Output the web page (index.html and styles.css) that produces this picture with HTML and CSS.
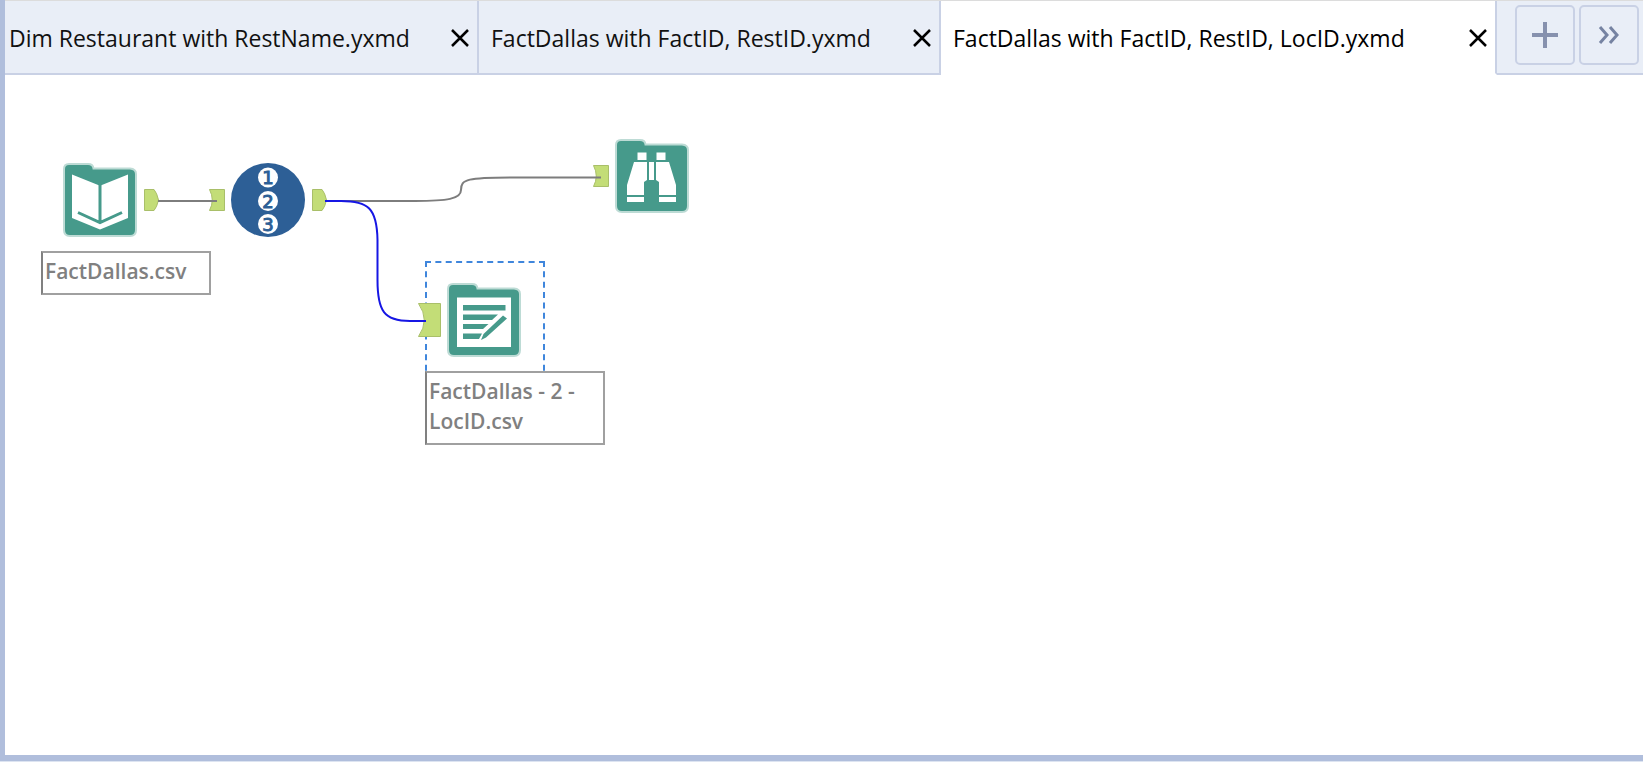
FILE: index.html
```html
<!DOCTYPE html>
<html lang="en">
<head>
<meta charset="utf-8">
<title>Workflow designer</title>
<link rel="stylesheet" href="styles.css">
</head>
<body>
<div class="window">
  <header class="tabbar">
    <div class="tab tab-first">
      <button class="tab-name" type="button">Dim Restaurant with RestName.yxmd</button>
      <button class="tab-close" type="button" aria-label="Close Dim Restaurant with RestName.yxmd"><svg viewBox="0 0 18 18"><path d="M1 1L17 17M17 1L1 17"/></svg></button>
    </div>
    <div class="tab">
      <button class="tab-name" type="button">FactDallas with FactID, RestID.yxmd</button>
      <button class="tab-close" type="button" aria-label="Close FactDallas with FactID, RestID.yxmd"><svg viewBox="0 0 18 18"><path d="M1 1L17 17M17 1L1 17"/></svg></button>
    </div>
    <div class="tab tab-active">
      <button class="tab-name" type="button">FactDallas with FactID, RestID, LocID.yxmd</button>
      <button class="tab-close" type="button" aria-label="Close FactDallas with FactID, RestID, LocID.yxmd"><svg viewBox="0 0 18 18"><path d="M1 1L17 17M17 1L1 17"/></svg></button>
    </div>
    <div class="actions">
      <button class="action" type="button" aria-label="New workflow"><svg viewBox="0 0 60 60"><path class="plus" d="M17 30H43M30 17V43"/></svg></button>
      <button class="action" type="button" aria-label="More tabs"><svg viewBox="0 0 60 60"><path class="chevrons" d="M21 22L28 30L21 38M31 22L38 30L31 38"/></svg></button>
    </div>
  </header>

  <main class="canvas">
    <div class="selection"></div>

    <svg class="anchor anchor-a" viewBox="0 0 16 22"><path d="M.5 .5H10Q13 4 14.500 11Q13 18 10 21.500H.5Z"/></svg>
    <svg class="anchor anchor-b" viewBox="0 0 16 22"><path d="M.5 .5H15.500V21.500H.5Q6 11 .5 .5Z"/></svg>
    <svg class="anchor anchor-c" viewBox="0 0 16 22"><path d="M.5 .5H10Q13 4 14.500 11Q13 18 10 21.500H.5Z"/></svg>
    <svg class="anchor anchor-d" viewBox="0 0 16 22"><path d="M.5 .5H15.500V21.500H.5Q6 11 .5 .5Z"/></svg>
    <svg class="anchor anchor-e" viewBox="0 0 23 34"><path d="M.5 .5H22.500V33.500H.5Q12 17 .5 .5Z"/></svg>

    <svg class="wires" viewBox="0 0 700 400">
      <path class="wire" d="M153 126H212"/>
      <path class="wire" d="M320 126H410C442 126 456 124 456 115C456 104 462 102.500 510 102.500H596"/>
      <path class="wire wire-selected" d="M320 126H336C363 126 372 133 372.500 165V205C372.500 236 379 246 405 246H421"/>
    </svg>

    <svg class="tool tool-input" viewBox="0 0 74 74" role="img" aria-label="Input Data">
      <path class="folder" d="M6 1H25Q30 1 30.500 5.500H67Q73 6 73 11V67Q73 73 67 73H7Q1 73 1 67V6Q1 1 6 1Z"/>
      <path class="paper" d="M9 11.500L37 22.700L65 11.500V55L37 66.500L9 55Z"/>
      <path class="mark" d="M37 22V59M15 49.500L37 59.500L59 49.500"/>
    </svg>

    <svg class="tool tool-record" viewBox="0 0 74 74" role="img" aria-label="Record ID">
      <circle class="disc" cx="37" cy="37" r="37"/>
      <circle class="paper" cx="37" cy="14.500" r="10"/>
      <circle class="paper" cx="37" cy="38" r="10"/>
      <circle class="paper" cx="37" cy="61" r="10"/>
      <text x="37" y="21">1</text>
      <text x="37" y="44.500">2</text>
      <text x="37" y="67.500">3</text>
    </svg>

    <svg class="tool tool-browse" viewBox="0 0 74 74" role="img" aria-label="Browse">
      <path class="folder" d="M6 1H25Q30 1 30.500 5.500H67Q73 6 73 11V67Q73 73 67 73H7Q1 73 1 67V6Q1 1 6 1Z"/>
      <path class="paper" d="M22.500 13.500H31.500V21H22.500ZM41.500 13.500H50.500V21H41.500ZM19 23H32V41L29 43V56H12V46ZM54 23H41V41L44 43V56H61V46ZM12 58H29V63H12ZM44 58H61V63H44ZM34 23H39V41H34Z"/>
    </svg>

    <svg class="tool tool-output" viewBox="0 0 74 74" role="img" aria-label="Output Data">
      <path class="folder" d="M6 1H25Q30 1 30.500 5.500H67Q73 6 73 11V67Q73 73 67 73H7Q1 73 1 67V6Q1 1 6 1Z"/>
      <path class="paper" d="M10 14.500H64V64H10Z"/>
      <path class="ink" d="M16 22H58.500V27.500H16ZM16 31.500H51L45 37H16ZM16 41H41.500L36 46H16ZM16 50.500H35L32 56H16ZM56 32.500L60 35.500L39 54.500L34 57L36.500 51Z"/>
    </svg>

    <div class="label label-input">FactDallas.csv</div>
    <div class="label label-output">FactDallas - 2 - LocID.csv</div>
  </main>
</div>
</body>
</html>
```
FILE: styles.css
```css
* {
  box-sizing: border-box;
}

body {
  margin: 0;
  background: #dde4f1;
  font-family: "Open Sans", "Noto Sans", sans-serif;
}

button {
  margin: 0;
  padding: 0;
  border: 0;
  background: none;
  color: inherit;
  font: inherit;
}

.window {
  display: flex;
  flex-direction: column;
  min-height: calc(100vh - 1px);
  border-left: 5px solid #b0bedc;
  border-bottom: 6px solid #b0bedc;
  background: #fff;
}

.tabbar {
  display: grid;
  grid-template-columns: 474fr 462fr 556fr auto;
  height: 75px;
  border-top: 1px solid #dcdcdc;
}

.tab {
  display: flex;
  align-items: center;
  justify-content: space-between;
  min-width: 0;
  padding: 2px 8px 0 12px;
  border-right: 2px solid #c9d1e5;
  border-bottom: 2px solid #c9d1e5;
  background: #e9eef7;
  color: #111;
  font-size: 23px;
  line-height: 32px;
  white-space: nowrap;
}

.tab-first {
  padding-left: 4px;
}

.tab-active {
  border-bottom-color: #fff;
  background: #fff;
  color: #000;
}

.tab-close {
  display: flex;
}

.tab-close svg {
  width: 18px;
  height: 18px;
  fill: none;
  stroke: #000;
  stroke-width: 2.500;
}

.actions {
  display: flex;
  gap: 4px;
  padding: 4px 4px 8px 18px;
  border-bottom: 2px solid #c9d1e5;
  background: #e9eef7;
}

.action {
  width: 60px;
  height: 60px;
  border: 2px solid #c9d1e5;
  border-radius: 5px;
}

.action svg {
  display: block;
  width: 60px;
  height: 60px;
  margin: -2px;
  fill: none;
}

.plus {
  stroke: #8691ae;
  stroke-width: 4;
}

.chevrons {
  stroke: #7683a2;
  stroke-width: 3;
}

.canvas {
  position: relative;
  flex: 1;
  background: #fff;
}

.wires,
.tool,
.anchor,
.label,
.selection {
  position: absolute;
}

.wires {
  left: 0;
  top: 0;
  width: 700px;
  height: 400px;
  fill: none;
}

.wire {
  stroke: #7d7d7d;
  stroke-width: 2;
}

.wire-selected {
  stroke: #1616e4;
}

.anchor {
  width: 16px;
  height: 22px;
  fill: #c3dd77;
  stroke: #a9bf69;
}

.anchor-a { left: 139px; top: 114px; }
.anchor-b { left: 204px; top: 114px; }
.anchor-c { left: 307px; top: 114px; }
.anchor-d { left: 588px; top: 90px; }
.anchor-e { left: 413px; top: 228px; width: 23px; height: 34px; }

.tool {
  width: 74px;
  height: 74px;
}

.tool-input { left: 58px; top: 88px; }
.tool-record { left: 226px; top: 88px; }
.tool-browse { left: 610px; top: 64px; }
.tool-output { left: 442px; top: 208px; }

.folder {
  fill: #469a8b;
  stroke: #bddbd5;
  stroke-width: 2;
}

.paper {
  fill: #fff;
}

.mark {
  fill: none;
  stroke: #469a8b;
  stroke-width: 3;
}

.ink {
  fill: #469a8b;
}

.disc {
  fill: #2d5f96;
}

.tool-record text {
  fill: #2d5f96;
  stroke: #2d5f96;
  font-family: "DejaVu Sans", sans-serif;
  font-size: 18px;
  text-anchor: middle;
}

.selection {
  left: 420px;
  top: 186px;
  width: 120px;
  height: 120px;
  border: 2px dashed #3f86dc;
}

.label {
  padding: 3px 2px 7px;
  border: 2px solid #a0a0a0;
  border-left-color: #808080;
  background: #fff;
  color: #808080;
  font-size: 21px;
  font-weight: 600;
  line-height: 30px;
}

.label-input {
  left: 36px;
  top: 176px;
  width: 170px;
}

.label-output {
  left: 420px;
  top: 296px;
  width: 180px;
}
```
